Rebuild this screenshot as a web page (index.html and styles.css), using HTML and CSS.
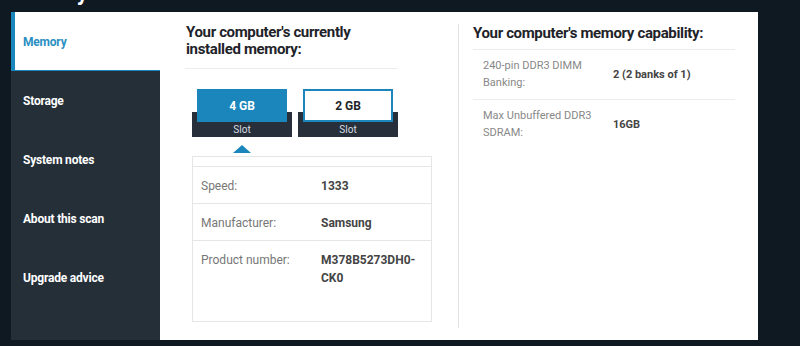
FILE: index.html
```html
<!DOCTYPE html>
<html>
<head>
  <meta charset="UTF-8">
  <title>About your RAM</title>
  <link rel="stylesheet" href="styles.css">
</head>
<body>
  <h1 class="page-title">About your RAM?</h1>
  <div class="panel">
    <nav class="sidebar">
      <a href="#" class="side-item active">Memory</a>
      <a href="#" class="side-item">Storage</a>
      <a href="#" class="side-item">System notes</a>
      <a href="#" class="side-item">About this scan</a>
      <a href="#" class="side-item">Upgrade advice</a>
    </nav>
    <main class="content">
      <section class="col-left">
        <h2 class="col-title">Your computer's currently installed memory:</h2>
        <div class="slots">
          <div class="slot selected">
            <div class="slot-size">4 GB</div>
            <div class="slot-base">Slot</div>
          </div>
          <div class="slot">
            <div class="slot-size">2 GB</div>
            <div class="slot-base">Slot</div>
          </div>
        </div>
        <div class="pointer"><span class="arrow"></span></div>
        <div class="details">
          <div class="details-top"></div>
          <div class="row">
            <div class="label">Speed:</div>
            <div class="value">1333</div>
          </div>
          <div class="row">
            <div class="label">Manufacturer:</div>
            <div class="value">Samsung</div>
          </div>
          <div class="row last">
            <div class="label">Product number:</div>
            <div class="value">M378B5273DH0-CK0</div>
          </div>
        </div>
      </section>
      <section class="col-right">
        <h2 class="col-title">Your computer's memory capability:</h2>
        <div class="cap-row">
          <div class="cap-label">240-pin DDR3 DIMM Banking:</div>
          <div class="cap-value">2 (2 banks of 1)</div>
        </div>
        <div class="cap-row last">
          <div class="cap-label">Max Unbuffered DDR3 SDRAM:</div>
          <div class="cap-value">16GB</div>
        </div>
      </section>
    </main>
  </div>
</body>
</html>
```

FILE: styles.css
```css
body {
  font-family: Roboto, "Liberation Sans", sans-serif;
  margin: 0;
  padding: 0;
  background: #0e1922;
  overflow: hidden;
}
.page-title {
  margin: -20px 0 0;
  padding: 0 12px;
  height: 28px;
  font-size: 22px;
  line-height: 26px;
  color: #fff;
  font-weight: 700;
}
.panel {
  display: flex;
  margin: 4px 42px 0 11px;
  height: 328px;
  background: #fff;
}
.sidebar {
  width: 149px;
  background: #252f38;
  display: flex;
  flex-direction: column;
}
.side-item {
  display: flex;
  align-items: center;
  height: 59px;
  padding-left: 12px;
  color: #fff;
  font-size: 12px;
  font-weight: 700;
  letter-spacing: -0.2px;
  text-decoration: none;
}
.side-item.active {
  background: #fff;
  color: #2a8fc2;
  border-left: 4px solid #1a86bb;
  padding-left: 8px;
  box-shadow: inset 0 -1px 0 #1a86bb;
}
.content {
  flex: 1;
  display: flex;
  padding: 12px 0 12px 25px;
}
.col-left {
  width: 247px;
}
.col-title {
  margin: 0;
  font-size: 15px;
  line-height: 17px;
  font-weight: 700;
  letter-spacing: -0.35px;
  color: #1e2329;
}
.col-left .col-title {
  width: 212px;
  padding: 0 0 10px 1px;
  border-bottom: 1px solid #ececec;
  margin-bottom: 20px;
}
.slots {
  display: flex;
  gap: 6px;
  padding-left: 7px;
}
.slot {
  width: 100px;
}
.slot-size {
  position: relative;
  z-index: 1;
  width: 90px;
  height: 33px;
  margin: 0 auto -10px;
  box-sizing: border-box;
  border: 2px solid #1a86bb;
  background: #fff;
  color: #1e2329;
  font-size: 12px;
  font-weight: 700;
  display: flex;
  align-items: center;
  justify-content: center;
}
.slot.selected .slot-size {
  background: #1a86bb;
  color: #fff;
}
.slot-base {
  height: 15px;
  padding-top: 10px;
  background: #262f3a;
  color: #d8dde2;
  font-size: 10px;
  line-height: 15px;
  text-align: center;
}
.pointer {
  height: 11px;
  padding: 8px 0 0 48px;
}
.arrow {
  display: block;
  width: 0;
  height: 0;
  border-left: 9px solid transparent;
  border-right: 9px solid transparent;
  border-bottom: 8px solid #1a86bb;
}
.details {
  margin-left: 7px;
  width: 240px;
  height: 166px;
  box-sizing: border-box;
  border: 1px solid #e6e6e6;
}
.details-top {
  height: 9px;
  border-bottom: 1px solid #e6e6e6;
}
.row {
  display: flex;
  padding: 10px 8px 8px;
  font-size: 12px;
  line-height: 18px;
  border-bottom: 1px solid #e6e6e6;
}
.row.last {
  border-bottom: none;
}
.label {
  width: 120px;
  color: #777;
}
.value {
  width: 95px;
  color: #444;
  font-weight: 700;
  word-break: break-all;
}
.col-right {
  margin-left: 26px;
  padding-left: 14px;
  border-left: 1px solid #e2e2e2;
  width: 262px;
}
.col-right .col-title {
  line-height: 18px;
  padding-bottom: 7px;
  border-bottom: 1px solid #ececec;
}
.cap-row {
  display: flex;
  align-items: center;
  padding: 7px 0 8px 10px;
  border-bottom: 1px solid #ececec;
  font-size: 11px;
  line-height: 17px;
}
.cap-row.last {
  border-bottom: none;
}
.cap-label {
  width: 130px;
  color: #888;
}
.cap-value {
  color: #444;
  font-weight: 700;
}
```
